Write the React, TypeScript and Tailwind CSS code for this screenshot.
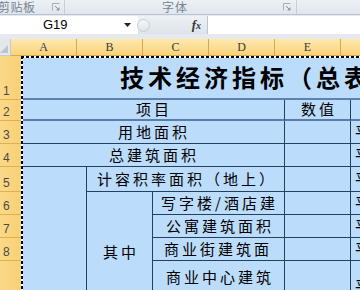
import React from 'react';

const CJK = "font-['Noto_Sans_CJK_SC','Noto_Sans',sans-serif]";

const Launcher = ({ className }: { className?: string }) => (
  <svg className={className} width="8" height="8" viewBox="0 0 8 8">
    <path d="M0.5 7.5V0.5H7.5" fill="none" stroke="#a4b0bd" strokeWidth="1" />
    <path d="M3 3L7 7M7 4.5V7H4.5" fill="none" stroke="#7d8a98" strokeWidth="1" />
  </svg>
);

const ROWS: { n: string; h: string }[] = [
  { n: '1', h: 'h-[44px]' },
  { n: '2', h: 'h-[21px]' },
  { n: '3', h: 'h-[23px]' },
  { n: '4', h: 'h-[23px]' },
  { n: '5', h: 'h-[25px]' },
  { n: '6', h: 'h-[23px]' },
  { n: '7', h: 'h-[23px]' },
  { n: '8', h: 'h-[23px]' },
  { n: '', h: 'h-[52px]' },
];

const COLS = ['A', 'B', 'C', 'D', 'E', 'F'];

const App: React.FC = () => {
  const cell = 'flex items-center overflow-hidden whitespace-nowrap text-[15px] tracking-[3px] text-black';

  return (
    <div className={`w-[360px] h-[290px] overflow-hidden bg-[#e6eaef] ${CJK}`}>
      {/* Ribbon group labels */}
      <div className="h-[15px] flex border-b border-[#b7c3d0] bg-gradient-to-b from-[#edf1f5] to-[#e0e6ed] text-[12px] leading-none text-[#788594]">
        <div className="w-[65px] flex items-center border-r border-[#c5cfda]">
          <span className="-ml-[2px] tracking-[0.5px]">剪贴板</span>
          <Launcher className="ml-auto mr-[4px]" />
        </div>
        <div className="w-[232px] flex items-center border-r border-[#c5cfda]">
          <span className="ml-[97px] tracking-[1px]">字体</span>
          <Launcher className="ml-auto mr-[5px]" />
        </div>
      </div>

      {/* Formula bar */}
      <div className="flex h-[18px] mt-[1px] bg-gradient-to-b from-[#eef1f5] to-[#dde3ea]">
        <div className="w-[138px] bg-white flex items-center">
          <span className="ml-[43px] text-[13px] font-['Liberation_Sans',sans-serif] text-black">G19</span>
          <svg className="ml-auto mr-[7px]" width="7" height="4" viewBox="0 0 7 4">
            <path d="M0 0H7L3.5 4Z" fill="#222" />
          </svg>
        </div>
        <div className="w-[69px] flex items-center">
          <div className="w-[13px] h-[13px] -ml-[1px] rounded-full border border-[#c4ccd6] bg-gradient-to-b from-[#f4f6f9] to-[#dfe4ea]" />
          <span className="ml-auto mr-[6px] font-['Liberation_Serif',serif] italic font-bold text-[13px] text-[#333]">
            f<span className="text-[10px]">x</span>
          </span>
        </div>
        <div className="flex-1 bg-white border-l border-[#b9c4d0]" />
      </div>

      <div className="h-[5px] bg-[#e6e9ed]" />

      {/* Column headers */}
      <div className="flex h-[17px]">
        <div className="w-[21px] flex items-end justify-end bg-[#e4e8ed] border-r border-b border-[#c3cad3] pr-[2px] pb-[2px]">
          <svg width="8" height="8" viewBox="0 0 8 8">
            <path d="M8 0V8H0Z" fill="#bcc4ce" />
          </svg>
        </div>
        {COLS.map((c) => (
          <div
            key={c}
            className="w-[66px] shrink-0 flex items-center justify-center bg-gradient-to-b from-[#fde9ae] to-[#f9d27a] border-r border-b border-[#d8a64e] font-['Liberation_Serif',serif] text-[12px] text-[#3a3a3a]"
          >
            {c}
          </div>
        ))}
      </div>

      {/* Sheet body */}
      <div className="flex">
        <div className="w-[21px] shrink-0 flex flex-col">
          {ROWS.map((r, i) => (
            <div
              key={i}
              className={`${r.h} flex items-end pl-[3px] pb-[2px] bg-gradient-to-r from-[#fbd986] to-[#f8d077] border-b border-[#e0b055] font-['Liberation_Sans',sans-serif] text-[12px] leading-none text-[#4a4a4a]`}
            >
              {r.n}
            </div>
          ))}
        </div>

        <div className="relative grid grid-cols-[66px_66px_66px_66px_66px_66px] grid-rows-[44px_21px_23px_23px_25px_23px_23px_23px_52px] bg-[#bcdcfb]">
          {/* Row 1 */}
          <div className="col-span-6 flex items-center pl-[99px] whitespace-nowrap overflow-hidden border-b-2 border-[#5e82b0] text-[24px] font-bold tracking-[4px] text-black">
            技术经济指标（总表）
          </div>

          {/* Row 2 */}
          <div className={`col-span-4 justify-center pl-[3px] border-r border-b-2 border-r-[#23405f] border-b-[#5a7daa] ${cell}`}>项目</div>
          <div className={`justify-center pl-[3px] border-r border-b-2 border-r-[#23405f] border-b-[#5a7daa] ${cell}`}>数值</div>
          <div className={`border-b-2 border-[#5a7daa] ${cell}`} />

          {/* Row 3 */}
          <div className={`col-span-4 justify-center pl-[3px] border-r border-b border-[#23405f] ${cell}`}>用地面积</div>
          <div className={`border-r border-b border-[#23405f] ${cell}`} />
          <div className={`pl-[4px] border-b border-[#23405f] ${cell}`}>平方米</div>

          {/* Row 4 */}
          <div className={`col-span-4 justify-center pl-[3px] border-r border-b border-[#23405f] ${cell}`}>总建筑面积</div>
          <div className={`border-r border-b border-[#23405f] ${cell}`} />
          <div className={`pl-[4px] border-b border-[#23405f] ${cell}`}>平方米</div>

          {/* Row 5 */}
          <div className={`row-span-5 border-r border-[#23405f] ${cell}`} />
          <div className={`col-span-3 justify-center pl-[3px] border-r border-b border-[#23405f] ${cell}`}>计容积率面积（地上）</div>
          <div className={`border-r border-b border-[#23405f] ${cell}`} />
          <div className={`pl-[4px] border-b border-[#23405f] ${cell}`}>平方米</div>

          {/* Row 6 */}
          <div className={`row-span-4 justify-center pl-[3px] border-r border-[#23405f] ${cell}`}>其中</div>
          <div className={`col-span-2 justify-start pl-[8px] border-r border-b border-[#23405f] ${cell}`}>写字楼/酒店建</div>
          <div className={`border-r border-b border-[#23405f] ${cell}`} />
          <div className={`pl-[4px] border-b border-[#23405f] ${cell}`}>平方米</div>

          {/* Row 7 */}
          <div className={`col-span-2 justify-center pl-[3px] border-r border-b border-[#23405f] ${cell}`}>公寓建筑面积</div>
          <div className={`border-r border-b border-[#23405f] ${cell}`} />
          <div className={`pl-[4px] border-b border-[#23405f] ${cell}`}>平方米</div>

          {/* Row 8 */}
          <div className={`col-span-2 justify-start pl-[11px] border-r border-b border-[#23405f] ${cell}`}>商业街建筑面</div>
          <div className={`border-r border-b border-[#23405f] ${cell}`} />
          <div className={`pl-[4px] border-b border-[#23405f] ${cell}`}>平方米</div>

          {/* Row 9 */}
          <div className="col-span-2 flex flex-col items-center justify-center pl-[3px] border-r border-b border-[#23405f] text-[15px] leading-[20px] tracking-[3px] text-black">
            <span>商业中心建筑</span>
            <span>面积</span>
          </div>
          <div className={`border-r border-b border-[#23405f] ${cell}`} />
          <div className={`pl-[4px] border-b border-[#23405f] ${cell}`}>平方米</div>

          {/* Selection marquee */}
          <div className="absolute left-0 top-0 w-full h-[2px] bg-[repeating-linear-gradient(90deg,#000_0_3px,#fff_3px_5px)]" />
          <div className="absolute left-0 top-0 w-[2px] h-full bg-[repeating-linear-gradient(180deg,#000_0_3px,#fff_3px_5px)]" />
        </div>
      </div>
    </div>
  );
};

export default App;
